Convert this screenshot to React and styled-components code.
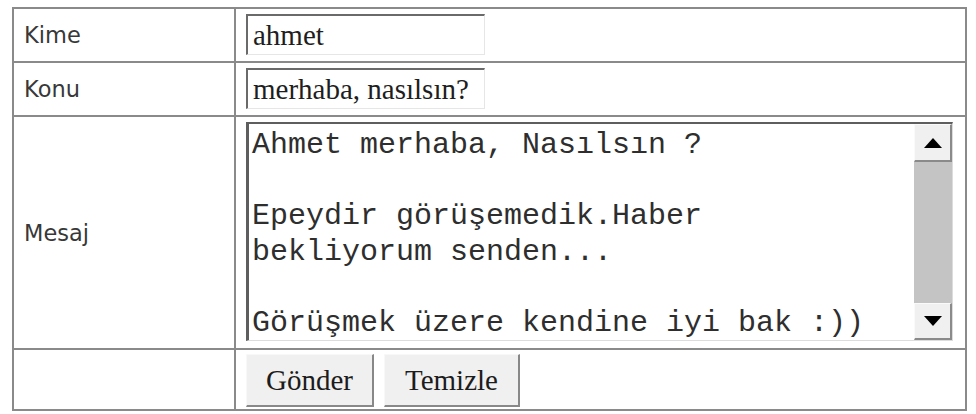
import styled, { createGlobalStyle } from 'styled-components';

const GlobalStyle = createGlobalStyle`
  html, body {
    margin: 0;
    background: #fff;
  }

  body {
    padding: 7px 9px 0 12px;
  }
`;

const FormTable = styled.table`
  width: 955px;
  border-collapse: collapse;
  border: 2px solid #8a8a8a;
`;

const LabelCell = styled.td`
  width: 210px;
  padding: 0 0 0 10px;
  border: 2px solid #8a8a8a;
  vertical-align: middle;
  font-family: 'DejaVu Sans', Verdana, sans-serif;
  font-size: 22.5px;
  color: #383838;
`;

const FieldCell = styled.td`
  padding: ${props => props.$pad || '5px 12px 6px 10px'};
  border: 2px solid #8a8a8a;
  vertical-align: top;
`;

const TextInput = styled.input`
  box-sizing: border-box;
  width: 239px;
  height: 41px;
  margin: 0;
  padding: 0 5px;
  display: block;
  border-style: solid;
  border-width: 2px 1px 1px 2px;
  border-color: #6a6a6a #e6e6e6 #e6e6e6 #6a6a6a;
  font-family: 'Liberation Serif', 'Times New Roman', serif;
  font-size: 29px;
  color: #1e1e1e;
  outline: none;
`;

const MessageBox = styled.div`
  box-sizing: border-box;
  display: flex;
  width: 707px;
  height: 219px;
  border-style: solid;
  border-width: 2px 1px 1px 3px;
  border-color: #5e5e5e #dcdcdc #dcdcdc #5e5e5e;
  background: #fff;
`;

const MessageText = styled.textarea`
  flex: 1;
  margin: 0;
  padding: 4px 3px;
  border: none;
  resize: none;
  overflow: hidden;
  outline: none;
  font-family: 'Liberation Mono', 'Courier New', monospace;
  font-size: 30px;
  line-height: 35.5px;
  color: #2e2e2e;
  background: transparent;
`;

const ScrollBar = styled.div`
  display: flex;
  flex-direction: column;
  width: 38px;
`;

const ScrollButton = styled.div`
  box-sizing: border-box;
  height: ${props => props.$h}px;
  display: flex;
  align-items: center;
  justify-content: center;
  background: #f0f0f0;
  border-style: solid;
  border-width: 1px 2px 2px 1px;
  border-color: #fafafa #8a8a8a #8a8a8a #fafafa;
`;

const ScrollTrack = styled.div`
  flex: 1;
  background: #c4c4c4;
`;

const ButtonRow = styled.div`
  display: flex;
  gap: 10px;
`;

const Button = styled.button`
  box-sizing: border-box;
  height: 53px;
  padding: 0 ${props => props.$px}px;
  margin: 0;
  background: #f0f0f0;
  border-style: solid;
  border-width: 1px 2px 2px 1px;
  border-color: #f8f8f8 #888888 #888888 #f8f8f8;
  font-family: 'Liberation Serif', 'Times New Roman', serif;
  font-size: 29px;
  color: #1c1c1c;
  cursor: pointer;
`;

function Arrow({ up }) {
  return (
    <svg width="18" height="10" viewBox="0 0 18 10">
      <polygon points={up ? '9,0 18,10 0,10' : '0,0 18,0 9,10'} fill="#000" />
    </svg>
  );
}

const message =
  'Ahmet merhaba, Nasılsın ?\n\nEpeydir görüşemedik.Haber\nbekliyorum senden...\n\nGörüşmek üzere kendine iyi bak :))';

export default function App() {
  return (
    <>
      <GlobalStyle />
      <form onSubmit={e => e.preventDefault()}>
        <FormTable>
          <tbody>
            <tr>
              <LabelCell>Kime</LabelCell>
              <FieldCell>
                <TextInput type="text" defaultValue="ahmet" />
              </FieldCell>
            </tr>
            <tr>
              <LabelCell>Konu</LabelCell>
              <FieldCell>
                <TextInput type="text" defaultValue="merhaba, nasılsın?" />
              </FieldCell>
            </tr>
            <tr>
              <LabelCell>Mesaj</LabelCell>
              <FieldCell $pad="5px 12px 7px 10px">
                <MessageBox>
                  <MessageText defaultValue={message} spellCheck={false} />
                  <ScrollBar>
                    <ScrollButton $h={38}>
                      <Arrow up />
                    </ScrollButton>
                    <ScrollTrack />
                    <ScrollButton $h={37}>
                      <Arrow />
                    </ScrollButton>
                  </ScrollBar>
                </MessageBox>
              </FieldCell>
            </tr>
            <tr>
              <LabelCell />
              <FieldCell $pad="4px 12px 2px 10px">
                <ButtonRow>
                  <Button type="submit" $px={19}>Gönder</Button>
                  <Button type="reset" $px={20}>Temizle</Button>
                </ButtonRow>
              </FieldCell>
            </tr>
          </tbody>
        </FormTable>
      </form>
    </>
  );
}
